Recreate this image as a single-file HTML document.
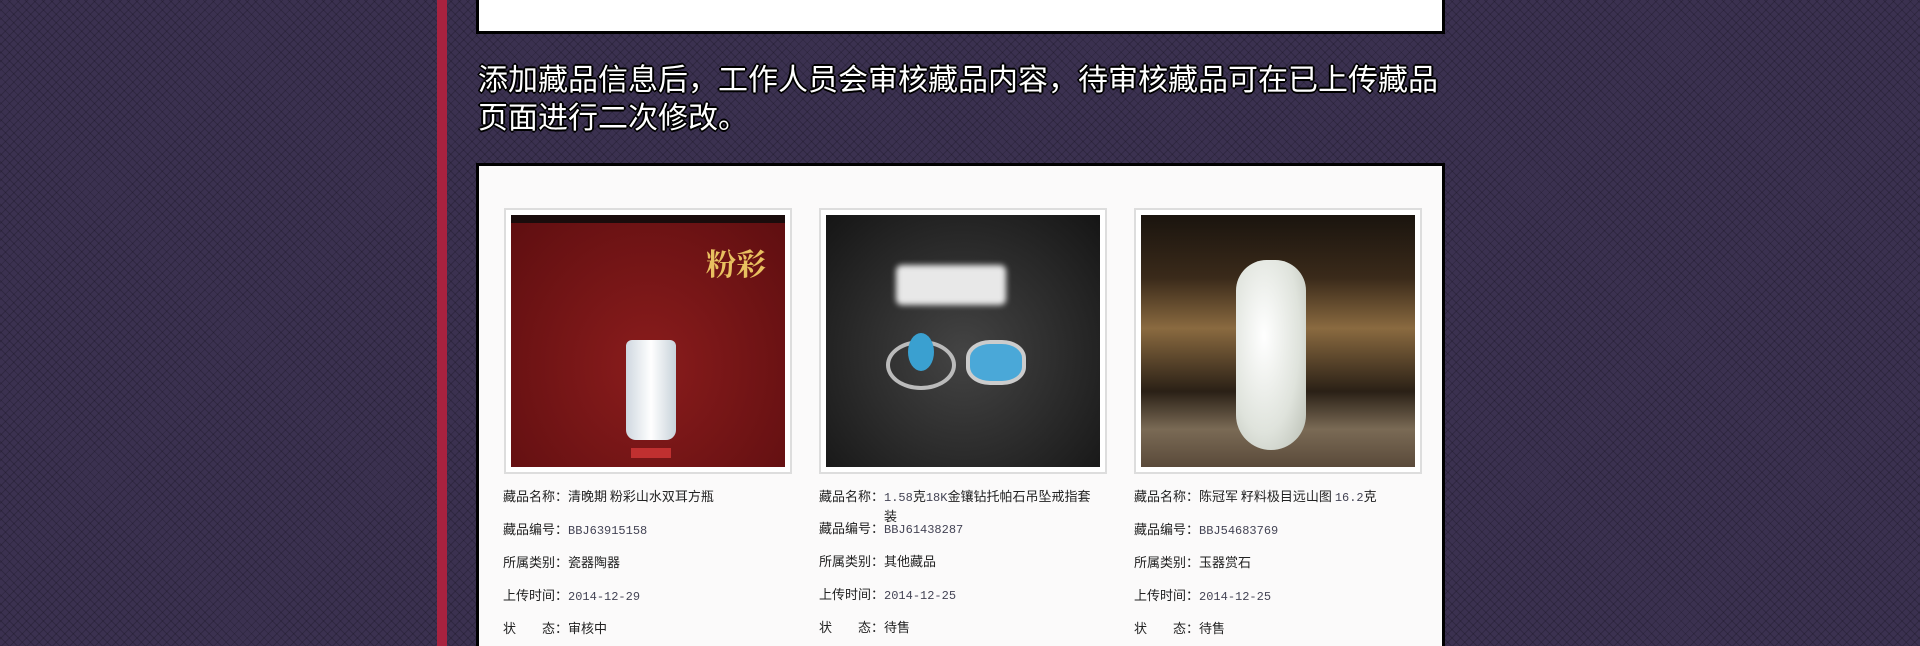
<!DOCTYPE html>
<html style="overflow:hidden;height:646px"><head><meta charset="utf-8"><style>
*{margin:0;padding:0;box-sizing:border-box}
html,body{width:1920px;height:646px;overflow:hidden}
#w{position:relative;width:1920px;height:646px;overflow:hidden;background-color:#3b3150;
background-image:repeating-linear-gradient(45deg,rgba(0,0,0,.18) 0 1px,transparent 1px 6px),repeating-linear-gradient(-45deg,rgba(0,0,0,.18) 0 1px,transparent 1px 6px);
font-family:"Liberation Sans","Noto Sans CJK SC",sans-serif}
.bar{position:absolute;left:437px;top:0;width:10px;height:646px;background:#a8223f}
.top{position:absolute;left:476px;top:0;width:969px;height:34px;background:#fff;border:3px solid #000;border-top:none}
.txt{position:absolute;left:478px;top:62px;width:1000px;color:#fff;font-size:30px;line-height:38px;font-weight:normal;
text-shadow:-2px 0 #000,2px 0 #000,0 -2px #000,0 2px #000,-1px -1px #000,1px 1px #000,-1px 1px #000,1px -1px #000}
.panel{position:absolute;left:476px;top:163px;width:969px;height:483px;background:#fbfafa;border:3px solid #000;border-bottom:none}
.card{position:absolute;top:208px;width:288px;height:266px;border:2px solid #ddd;background:#fff;padding:5px}
.img{width:100%;height:100%;position:relative;overflow:hidden}
.info{position:absolute;top:487px;width:300px;font-size:13px;color:#222;font-family:"Noto Sans CJK SC","WenQuanYi Zen Hei",sans-serif}
.info div{height:33px;line-height:18px}
.info span{color:#445;font-family:"Liberation Mono",monospace;font-size:12px}
</style></head><body><div id="w">
<div class="bar"></div>
<div class="top"></div>
<div class="txt">添加藏品信息后，工作人员会审核藏品内容，待审核藏品可在已上传藏品<br>页面进行二次修改。</div>
<div class="panel"></div>

<div class="card" style="left:504px"><div class="img" style="background:radial-gradient(ellipse at 50% 60%,#8a1c1c,#5e0e10)">
<div style="position:absolute;left:0;top:0;right:0;height:8px;background:#1a0c0c"></div>
<div style="position:absolute;left:195px;top:25px;color:#e8c060;font-size:30px;font-weight:bold;font-family:'Noto Serif CJK SC',serif">粉彩</div>
<div style="position:absolute;left:115px;top:125px;width:50px;height:100px;background:linear-gradient(90deg,#cfd8e0,#fff,#c8d2da);border-radius:6px 6px 10px 10px"></div>
<div style="position:absolute;left:120px;top:233px;width:40px;height:10px;background:#c03030"></div>
</div></div>

<div class="card" style="left:819px"><div class="img" style="background:radial-gradient(ellipse at 50% 55%,#444,#151515)">
<div style="position:absolute;left:70px;top:50px;width:110px;height:40px;background:#e8e8e8;border-radius:6px;filter:blur(3px)"></div>
<div style="position:absolute;left:60px;top:125px;width:70px;height:50px;border:4px solid #bbb;border-radius:50%"></div>
<div style="position:absolute;left:82px;top:118px;width:26px;height:38px;background:#3aa0d0;border-radius:50%"></div>
<div style="position:absolute;left:140px;top:125px;width:60px;height:45px;background:#4aa8d8;border:4px solid #ccc;border-radius:40%"></div>
</div></div>

<div class="card" style="left:1134px"><div class="img" style="background:linear-gradient(180deg,#1a140e 0,#3a2a1a 25%,#8a6a40 45%,#2a2016 70%,#7a6a55 85%,#5a4a3a 100%)">
<div style="position:absolute;left:95px;top:45px;width:70px;height:190px;background:radial-gradient(ellipse at 40% 40%,#fff,#dfe3dc 60%,#b8bdb2);border-radius:35px 35px 40px 40px"></div>
</div></div>

<div class="info" style="left:503px">
<div>藏品名称：清晚期 粉彩山水双耳方瓶</div><div>藏品编号：<span>BBJ63915158</span></div><div>所属类别：瓷器陶器</div><div>上传时间：<span>2014-12-29</span></div><div>状&emsp;&emsp;态：审核中</div></div>
<div class="info" style="left:819px">
<div>藏品名称：<span>1.58</span>克<span>18K</span>金镶钻托帕石吊坠戒指套<br>&emsp;&emsp;&emsp;&emsp;&emsp;装</div><div style="margin-top:-1px">藏品编号：<span>BBJ61438287</span></div><div>所属类别：其他藏品</div><div>上传时间：<span>2014-12-25</span></div><div>状&emsp;&emsp;态：待售</div></div>
<div class="info" style="left:1134px">
<div>藏品名称：陈冠军 籽料极目远山图 <span>16.2</span>克</div><div>藏品编号：<span>BBJ54683769</span></div><div>所属类别：玉器赏石</div><div>上传时间：<span>2014-12-25</span></div><div>状&emsp;&emsp;态：待售</div></div>
</div></body></html>
